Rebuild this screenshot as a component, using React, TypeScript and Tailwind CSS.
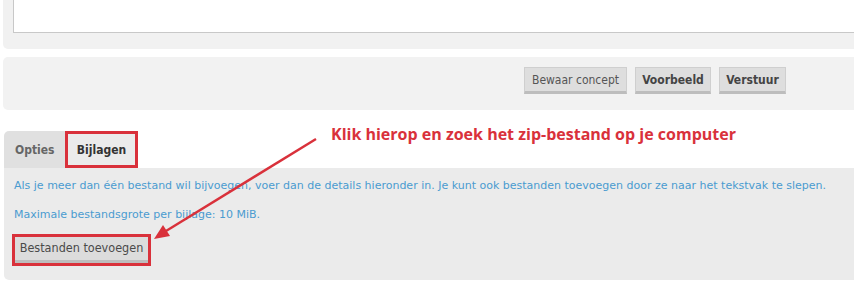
const App = () => {
  return (
    <div className="w-[854px] h-[288px] bg-white overflow-hidden relative font-['DejaVu_Sans',sans-serif]">
      {/* Editor panel */}
      <div className="ml-[3px] mr-[-10px] h-[49px] bg-[#f1f1f1] rounded-b-[5px] pl-[10px]">
        <div className="h-[33px] bg-white border-l border-b border-[#c8c8c8]" />
      </div>

      {/* Submit buttons */}
      <div className="ml-[3px] mr-[-10px] mt-[8px] h-[53px] bg-[#f2f2f2] rounded-[5px] flex items-start justify-end pr-[78px] pt-[10px] gap-[8px] font-['DejaVu_Sans_Condensed',sans-serif]">
        <button className="h-[27px] bg-[#dedede] border border-[#cfcfcf] border-b-[3px] border-b-[#bdbdbd] text-[12px] text-[#555] w-[103px] whitespace-nowrap">
          Bewaar concept
        </button>
        <button className="h-[27px] bg-[#dedede] border border-[#cfcfcf] border-b-[3px] border-b-[#bdbdbd] text-[12px] font-bold text-[#444] w-[76px] whitespace-nowrap">
          Voorbeeld
        </button>
        <button className="h-[27px] bg-[#dedede] border border-[#cfcfcf] border-b-[3px] border-b-[#bdbdbd] text-[12px] font-bold text-[#444] w-[67px] whitespace-nowrap">
          Verstuur
        </button>
      </div>

      {/* Tabs */}
      <div className="ml-[4px] mt-[21px] flex h-[37px] font-['DejaVu_Sans_Condensed',sans-serif]">
        <div className="w-[61px] bg-[#e0e0e0] rounded-tl-[5px] flex items-center pl-[11px] text-[12px] font-bold text-[#666]">
          Opties
        </div>
        <div className="w-[73px] bg-[#ebebeb] border-[3px] border-[#d9313b] flex items-center justify-center text-[12px] font-bold text-[#333]">
          Bijlagen
        </div>
      </div>

      {/* Attachments panel */}
      <div className="ml-[4px] mr-[-10px] h-[112px] bg-[#ebebeb] rounded-bl-[5px] pl-[10px] pt-[10px] text-[11px] text-[#4a9bd0]">
        <p className="leading-[16px] whitespace-nowrap">
          Als je meer dan één bestand wil bijvoegen, voer dan de details hieronder in. Je kunt ook bestanden toevoegen door ze naar het tekstvak te slepen.
        </p>
        <p className="leading-[16px] mt-[13px]">Maximale bestandsgrote per bijlage: 10 MiB.</p>
        <div className="mt-[11px] inline-block border-[3px] border-[#d9313b] -ml-[2px]">
          <button className="h-[26px] bg-[#dcdcdc] border-b-[3px] border-b-[#bdbdbd] text-[12.5px] text-[#4a4a4a] w-[133px] whitespace-nowrap font-['DejaVu_Sans_Condensed',sans-serif]">
            Bestanden toevoegen
          </button>
        </div>
      </div>

      {/* Annotation */}
      <div className="absolute left-[331px] top-[122px] text-[16px] font-bold text-[#d9313b] font-['Open_Sans',sans-serif] whitespace-nowrap">
        Klik hierop en zoek het zip-bestand op je computer
      </div>
      <svg className="absolute left-0 top-0" width="854" height="288" viewBox="0 0 854 288">
        <line x1="316" y1="139" x2="166" y2="231" stroke="#d9313b" strokeWidth="2.5" />
        <polygon points="154,239 163,225 170,236" fill="#d9313b" />
      </svg>
    </div>
  );
};

export default App;
